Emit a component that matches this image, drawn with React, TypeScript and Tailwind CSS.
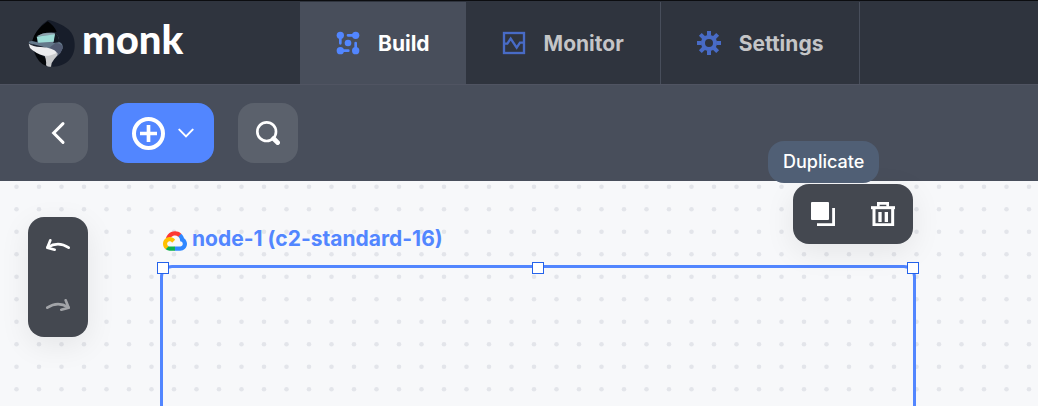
import type { ReactNode } from "react";

function MonkLogo() {
  return (
    <svg className="size-12" viewBox="84 54 144 144" aria-hidden="true">
      <path d="M144 57 C158 58 190 72 205 85 C219 98 225 116 224 136 C223 172 196 197 160 197 C132 194 108 178 101 150 L98 116 Q114 76 144 57Z" fill="#171d2a" />
      <path d="M143 61 Q161 73 170 92 L150 100 L108 122 L97 120 Q104 88 143 61Z" fill="#020304" />
      <path d="M103 150 L138 172 L140 196 Q112 186 103 150Z" fill="#06080b" />
      <path d="M112 108 Q128 92 164 95 Q178 104 176 122 Q190 126 188 142 Q184 154 174 162 Q150 142 124 136 L87 127 Q84 120 96 120 L112 124Z" fill="#64788a" />
      <path d="M166 126 Q190 128 188 142 Q184 156 172 166 L146 142Z" fill="#525b72" />
      <path d="M164 94 Q180 108 176 124 L160 126Z" fill="#141923" />
      <path d="M110 106 Q130 92 164 97 L165 101Z" fill="#8fa3ad" />
      <path d="M110 107 L165 100 L161 122 Q134 124 115 125Z" fill="#9ddbd5" />
      <path d="M86 128 Q98 136 122 138 Q160 140 170 154 L168 166 L134 165 Q104 156 90 141Z" fill="#ececee" />
      <path d="M134 164 Q150 166 172 155 Q176 164 163 174 Q154 184 153 197 Q145 199 138 193 Q140 178 134 164Z" fill="#c9cacc" />
    </svg>
  );
}

function BuildIcon() {
  return (
    <svg className="size-6" viewBox="111 90 72 72" fill="#5286ff" stroke="#5286ff" aria-hidden="true">
      <path d="M124 103V127 M147 103H170 M170 126V149 M124 149H148" strokeWidth="8" strokeLinecap="round" />
      <g stroke="none">
        <circle cx="124" cy="103" r="11" />
        <circle cx="170" cy="103" r="11" />
        <circle cx="124" cy="149" r="11" />
        <circle cx="170" cy="149" r="11" />
        <circle cx="147" cy="126" r="10" />
      </g>
    </svg>
  );
}

function MonitorIcon() {
  return (
    <svg className="size-6" viewBox="606 90 72 72" fill="none" stroke="#486bc6" strokeWidth="7" aria-hidden="true">
      <rect x="612" y="96" width="60" height="60" />
      <path d="M612 128H622L632 113L650 140L660 125H672" />
    </svg>
  );
}

function SettingsIcon() {
  return (
    <svg className="size-6" viewBox="-36 -36 72 72" fill="none" stroke="#486bc6" aria-hidden="true">
      <circle r="18" strokeWidth="12" />
      <path d="M0 -22V-36 M0 22V36 M-22 0H-36 M22 0H36 M15 -15L26 -26 M15 15L26 26 M-15 15L-26 26 M-15 -15L-26 -26" strokeWidth="12" />
    </svg>
  );
}

function CloudIcon() {
  return (
    <svg className="h-5 w-6" viewBox="0 0 256 206" aria-hidden="true">
      <path fill="#fd3832" d="M170.25 56.82L192.5 34.57L193.99 25.2C153.44 -11.68 88.98 -7.5 52.42 33.92C42.27 45.42 34.73 59.76 30.72 74.57L38.69 73.45L83.19 66.11L86.63 62.6C106.42 40.85 139.9 37.93 162.76 56.43Z" />
      <path fill="#2f87ff" d="M224.2 73.92C219.09 55.08 208.59 38.15 193.99 25.2L162.76 56.43C175.94 67.2 183.46 83.44 183.13 100.47V106.01C198.49 106.01 210.93 118.45 210.93 133.81C210.93 149.16 198.49 161.29 183.13 161.29H127.46L122 167.22V200.56L127.46 205.8H183.13C223.06 206.11 255.69 174.3 256 134.37C256.19 110.17 244.25 87.48 224.2 73.92" />
      <path fill="#0cb14b" d="M71.87 205.8H127.46V161.29H71.87C67.91 161.29 64.07 160.44 60.47 158.79L52.58 161.21L30.18 183.46L28.22 191.04C40.79 200.53 56.12 205.86 71.87 205.8" />
      <path fill="#ffc000" d="M71.87 61.43C31.94 61.66 -.24 94.23 0 134.16C.13 156.46 10.55 177.45 28.22 191.04L60.47 158.79C46.48 152.47 40.26 136.01 46.58 122.02C52.9 108.03 69.37 101.81 83.36 108.13C89.52 110.91 94.46 115.85 97.25 122.02L129.49 89.77C115.77 71.83 94.45 61.34 71.87 61.43" />
    </svg>
  );
}

function Tab({ icon, label, active = false }: { icon: ReactNode; label: string; active?: boolean }) {
  return (
    <a
      href="#"
      aria-current={active ? "page" : undefined}
      className={
        active
          ? "flex items-center gap-[18px] bg-[#484e5b] px-9 text-white"
          : "flex items-center gap-[18px] border-r border-[#484e5b] px-9 text-[#c4c5c7]"
      }
    >
      {icon}
      <span className="pt-0.5">{label}</span>
    </a>
  );
}

function IconButton({ label, className = "", children }: { label: string; className?: string; children: ReactNode }) {
  return (
    <button type="button" aria-label={label} className={`flex size-15 items-center justify-center ${className}`}>
      {children}
    </button>
  );
}

function Handle({ className }: { className: string }) {
  return <span className={`absolute size-3 border border-[#2563eb] bg-white ${className}`} />;
}

export default function App() {
  return (
    <div className="flex min-h-screen flex-col font-['Inter',sans-serif]">
      <header className="flex h-[84px] border-t border-[#0c0d10] bg-[#2f343e]">
        <a href="#" className="flex w-[300px] items-center gap-1.5 pl-7 text-white">
          <MonkLogo />
          <span className="pb-2 font-['Lato',sans-serif] text-[40px] leading-none font-black">monk</span>
        </a>
        <nav className="flex pt-px text-[21px] font-bold">
          <Tab icon={<BuildIcon />} label="Build" active />
          <Tab icon={<MonitorIcon />} label="Monitor" />
          <Tab icon={<SettingsIcon />} label="Settings" />
        </nav>
      </header>

      <div className="flex h-[97px] items-center gap-6 border-t border-[#505462] bg-[#484e5b] px-7">
        <IconButton label="Back" className="rounded-2xl bg-[#5b616c]">
          <svg className="size-6" viewBox="108 93 72 72" fill="none" stroke="white" strokeWidth="9" aria-hidden="true">
            <path d="M159 101L131 129L159 157" strokeLinecap="round" />
          </svg>
        </IconButton>
        <button type="button" aria-label="Add" className="flex h-15 items-center gap-[13px] rounded-2xl bg-[#5286ff] px-5">
          <svg className="size-[33px]" viewBox="0 0 99 99" fill="none" stroke="white" aria-hidden="true">
            <circle cx="49.5" cy="49.5" r="43.5" strokeWidth="12" />
            <path d="M49.5 24V75M24 49.5H75" strokeWidth="11" />
          </svg>
          <svg className="size-4" viewBox="0 0 48 48" fill="none" stroke="white" strokeWidth="6" aria-hidden="true">
            <path d="M4 14L24 34L44 14" strokeLinecap="round" />
          </svg>
        </button>
        <IconButton label="Search" className="rounded-2xl bg-[#5b616c]">
          <svg className="size-6" viewBox="738 93 72 72" fill="none" stroke="white" aria-hidden="true">
            <circle cx="770" cy="125" r="28" strokeWidth="8" />
            <path d="M792 147L803 158" strokeWidth="14" strokeLinecap="round" />
            <path d="M786 141L798 153" strokeWidth="8" />
          </svg>
        </IconButton>
      </div>

      <main className="relative grow bg-[#f7f8fa]">
        <svg className="absolute size-full" aria-hidden="true">
          <pattern id="dots" width="45" height="45" patternUnits="userSpaceOnUse">
            <g fill="#e3e5ea">
              <circle cx="16.5" cy="5.7" r="2.3" />
              <circle cx="39" cy="5.7" r="2.3" />
              <circle cx="16.5" cy="28.2" r="2.3" />
              <circle cx="39" cy="28.2" r="2.3" />
            </g>
          </pattern>
          <rect width="100%" height="100%" fill="url(#dots)" />
        </svg>

        <div className="absolute top-9 left-7 flex flex-col rounded-2xl bg-[#444850] shadow-[0_8px_30px_rgba(0,0,0,0.08)]">
          <IconButton label="Undo">
            <svg className="size-7" viewBox="132 159 84 84" fill="none" stroke="white" strokeWidth="8" strokeLinecap="round" strokeLinejoin="round" aria-hidden="true">
              <path d="M206 203Q175 182 143 202" />
              <path d="M151 181L142 203L164 209" />
            </svg>
          </IconButton>
          <IconButton label="Redo">
            <svg className="size-7 opacity-50" viewBox="132 339 84 84" fill="none" stroke="white" strokeWidth="8" strokeLinecap="round" strokeLinejoin="round" aria-hidden="true">
              <path d="M142 383Q173 362 205 382" />
              <path d="M197 361L206 383L184 389" />
            </svg>
          </IconButton>
        </div>

        <div className="absolute top-[84px] bottom-0 left-[160px] w-[756px] rounded-t-xl border-3 border-b-0 border-[#5286ff]">
          <div className="absolute -top-[43px] left-0 flex items-center gap-[5px] text-[21px] leading-7 font-bold whitespace-nowrap text-[#5286ff]">
            <span className="pt-1">
              <CloudIcon />
            </span>
            <span>node-1 (c2-standard-16)</span>
          </div>
          <Handle className="-top-1.5 -left-1.5" />
          <Handle className="-top-1.5 left-[369px]" />
          <Handle className="-top-1.5 -right-1.5" />
        </div>

        <div className="absolute top-[3px] left-[793px] flex rounded-2xl bg-[#444850] shadow-[0_8px_30px_rgba(0,0,0,0.08)]">
          <IconButton label="Duplicate">
            <svg className="size-6" viewBox="0 0 72 72" aria-hidden="true">
              <rect width="54" height="54" rx="3" fill="white" />
              <path d="M68 18V68H18" fill="none" stroke="white" strokeWidth="9" />
            </svg>
          </IconButton>
          <IconButton label="Delete">
            <svg className="size-6" viewBox="0 0 72 72" fill="none" stroke="white" aria-hidden="true">
              <path d="M0 17H72" strokeWidth="9" />
              <path d="M22 14V4H50V14" strokeWidth="8" />
              <path d="M9 18V68H65V18" strokeWidth="9" />
              <path d="M27 30V60M46 30V60" strokeWidth="10" />
            </svg>
          </IconButton>
        </div>
        <div role="tooltip" className="absolute -top-10 left-[768px] rounded-2xl bg-[#505f75] px-[15px] py-[7px] text-lg leading-7 font-medium text-white">
          Duplicate
        </div>
      </main>
    </div>
  );
}
